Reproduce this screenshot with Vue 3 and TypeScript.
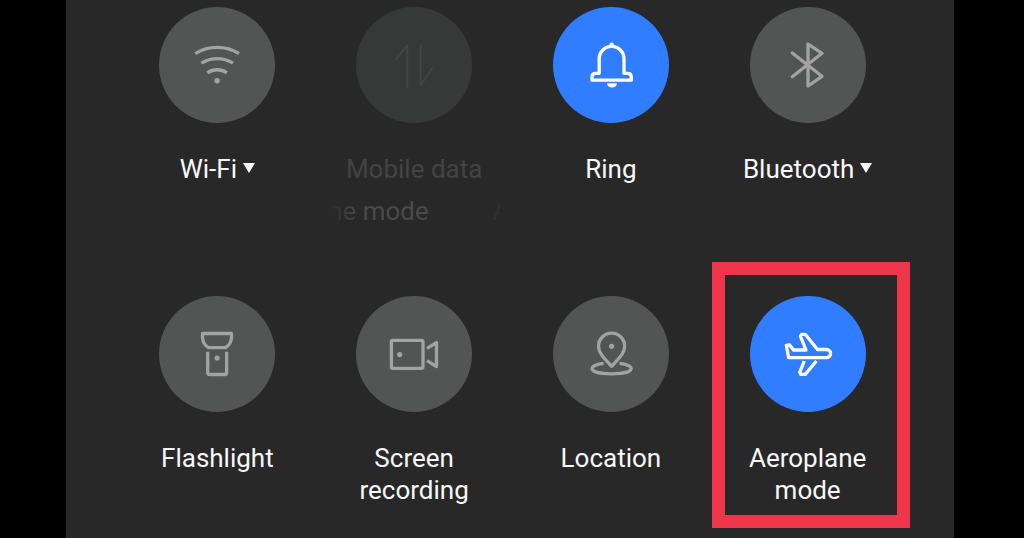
<script setup lang="ts">
interface Tile {
  id: string
  label: string
  state: 'off' | 'on' | 'unavailable'
  menu?: boolean
  highlighted?: boolean
}

const tiles: Tile[] = [
  { id: 'wifi', label: 'Wi-Fi', state: 'off', menu: true },
  { id: 'data', label: 'Mobile data', state: 'unavailable' },
  { id: 'ring', label: 'Ring', state: 'on' },
  { id: 'bluetooth', label: 'Bluetooth', state: 'off', menu: true },
  { id: 'flashlight', label: 'Flashlight', state: 'off' },
  { id: 'recording', label: 'Screen recording', state: 'off' },
  { id: 'location', label: 'Location', state: 'off' },
  { id: 'aeroplane', label: 'Aeroplane mode', state: 'on', highlighted: true },
]
</script>

<template>
  <main class="panel">
    <div class="tiles">
      <div v-for="tile in tiles" :key="tile.id" class="cell">
        <button type="button" class="tile" :class="tile.state" :aria-pressed="tile.state === 'on'" :disabled="tile.state === 'unavailable'">
          <span class="disc">
            <svg class="icon" viewBox="0 0 60 60" aria-hidden="true">
              <g v-if="tile.id === 'wifi'">
                <path class="butt" d="M8.2 18.6A42 42 0 0 1 52 18.6M14.4 28.2A30 30 0 0 1 46 28.2M20.4 37.8A17 17 0 0 1 39.8 37.8" />
                <circle class="dot" cx="30.1" cy="45.7" r="2.7" />
              </g>
              <path v-else-if="tile.id === 'data'" class="thin" d="M12 24L23.3 10V52M36.7 9.5V50L48 33.5" />
              <g v-else-if="tile.id === 'ring'">
                <path d="M18.2 38.3V23.8A12.4 12.4 0 0 1 43 23.8V38.3H46.5Q50.3 38.3 50.3 42V45.2H11V42Q11 38.3 14.7 38.3Z" />
                <circle class="dot" cx="30.6" cy="9.6" r="2.1" />
                <path class="dot" d="M26 48.3H36Q35.4 52.6 31 52.6T26 48.3Z" />
              </g>
              <path v-else-if="tile.id === 'bluetooth'" d="M14.3 18L44 41.3L30 51V9L44 18.3L14.3 41.8" />
              <g v-else-if="tile.id === 'flashlight'">
                <path d="M15.5 9.5H44.5V13.5Q44.2 20 38.5 23.6H21.5Q15.8 20 15.5 13.5Z" />
                <path class="butt" d="M20.7 27.7V48.5Q20.7 50.5 22.7 50.5H37.6Q39.6 50.5 39.6 48.5V27.7" />
                <circle class="dot" cx="30.1" cy="34" r="2.6" />
              </g>
              <g v-else-if="tile.id === 'recording'">
                <rect x="7.4" y="16.3" width="31.6" height="28" rx="1.6" />
                <circle class="dot" cx="15.7" cy="30.6" r="2.6" />
                <path class="butt" d="M43 24.4L52.5 18.6V42.6L43 36.6" />
              </g>
              <g v-else-if="tile.id === 'location'">
                <path d="M30.6 42.3C24 35 17.5 29.5 17.5 22.3A13.1 13.1 0 0 1 43.7 22.3C43.7 29.5 37.2 35 30.6 42.3Z" />
                <circle class="dot" cx="30.6" cy="22.3" r="2.6" />
                <path class="butt" d="M22.6 39.4C15 40.3 11 42.3 11 44.6C11 47.8 19 49.8 30.6 49.8S50.2 47.8 50.2 44.6C50.2 42.3 46.2 40.3 38.6 39.4" />
              </g>
              <g v-else>
                <path d="M8.3 21.3L11.5 20.9L15.6 26H28L22.4 12.2L23.6 10.3H27.2L39.5 25.5H48.5A4.1 4.1 0 0 1 48.5 33.7H10.6Z" />
                <path class="butt" d="M26.3 37L21.7 48.3L22.8 50.4H27.3L38.4 37" />
              </g>
            </svg>
          </span>
          <span class="label">
            <span class="words">{{ tile.label }}</span>
            <svg v-if="tile.menu" class="caret" viewBox="0 0 12 10" aria-hidden="true"><path d="M0 0H12L6 10Z" /></svg>
          </span>
        </button>
        <div v-if="tile.id === 'data'" class="marquee"><span>ne mode</span><span>A</span></div>
        <div v-if="tile.highlighted" class="frame"></div>
      </div>
    </div>
  </main>
</template>

<style>
body {
  background: #000;
}
</style>

<style scoped>
.panel {
  box-sizing: border-box;
  min-height: 100vh;
  margin: 0 70px 0 66px;
  padding: 7px 48px 10px 53px;
  background: #282828;
  font-family: Roboto, "Liberation Sans", sans-serif;
  font-size: 26px;
  line-height: 32px;
}

.tiles {
  display: grid;
  grid-template-columns: repeat(4, minmax(0, 1fr));
  row-gap: 69px;
}

.cell {
  position: relative;
  display: flex;
  flex-direction: column;
  align-items: center;
}

.tile {
  display: flex;
  flex-direction: column;
  align-items: center;
  gap: 30px;
  padding: 0;
  border: 0;
  background: none;
  color: #f8f8f8;
  font: inherit;
  cursor: pointer;
}

.disc {
  display: grid;
  place-items: center;
  width: 116px;
  height: 116px;
  border-radius: 50%;
  background: #535454;
  color: #a3a3a3;
}

.on .disc {
  background: #317dff;
  color: #fff;
}

.unavailable {
  color: #434343;
}

.unavailable .disc {
  background: #373838;
  color: #444;
}

.icon {
  width: 60px;
  height: 60px;
  fill: none;
  stroke: currentColor;
  stroke-width: 3.3;
  stroke-linecap: round;
  stroke-linejoin: round;
}

.butt {
  stroke-linecap: butt;
}

.thin {
  stroke-width: 2;
}

.dot {
  fill: currentColor;
  stroke: none;
}

.label {
  display: flex;
  justify-content: center;
  gap: 6px;
}

.words {
  max-width: 140px;
}

.caret {
  width: 12px;
  height: 10px;
  margin-top: 10px;
  fill: currentColor;
}

.marquee {
  display: flex;
  gap: 64px;
  width: 172px;
  margin-top: 10px;
  overflow: hidden;
  color: #4a4a4a;
  white-space: nowrap;
  mask-image: linear-gradient(to right, transparent, #000 32px, #000 130px, transparent 182px);
}

.frame {
  position: absolute;
  inset: -34px -4px -22px 3px;
  border: 13px solid #ee3549;
  pointer-events: none;
}
</style>
